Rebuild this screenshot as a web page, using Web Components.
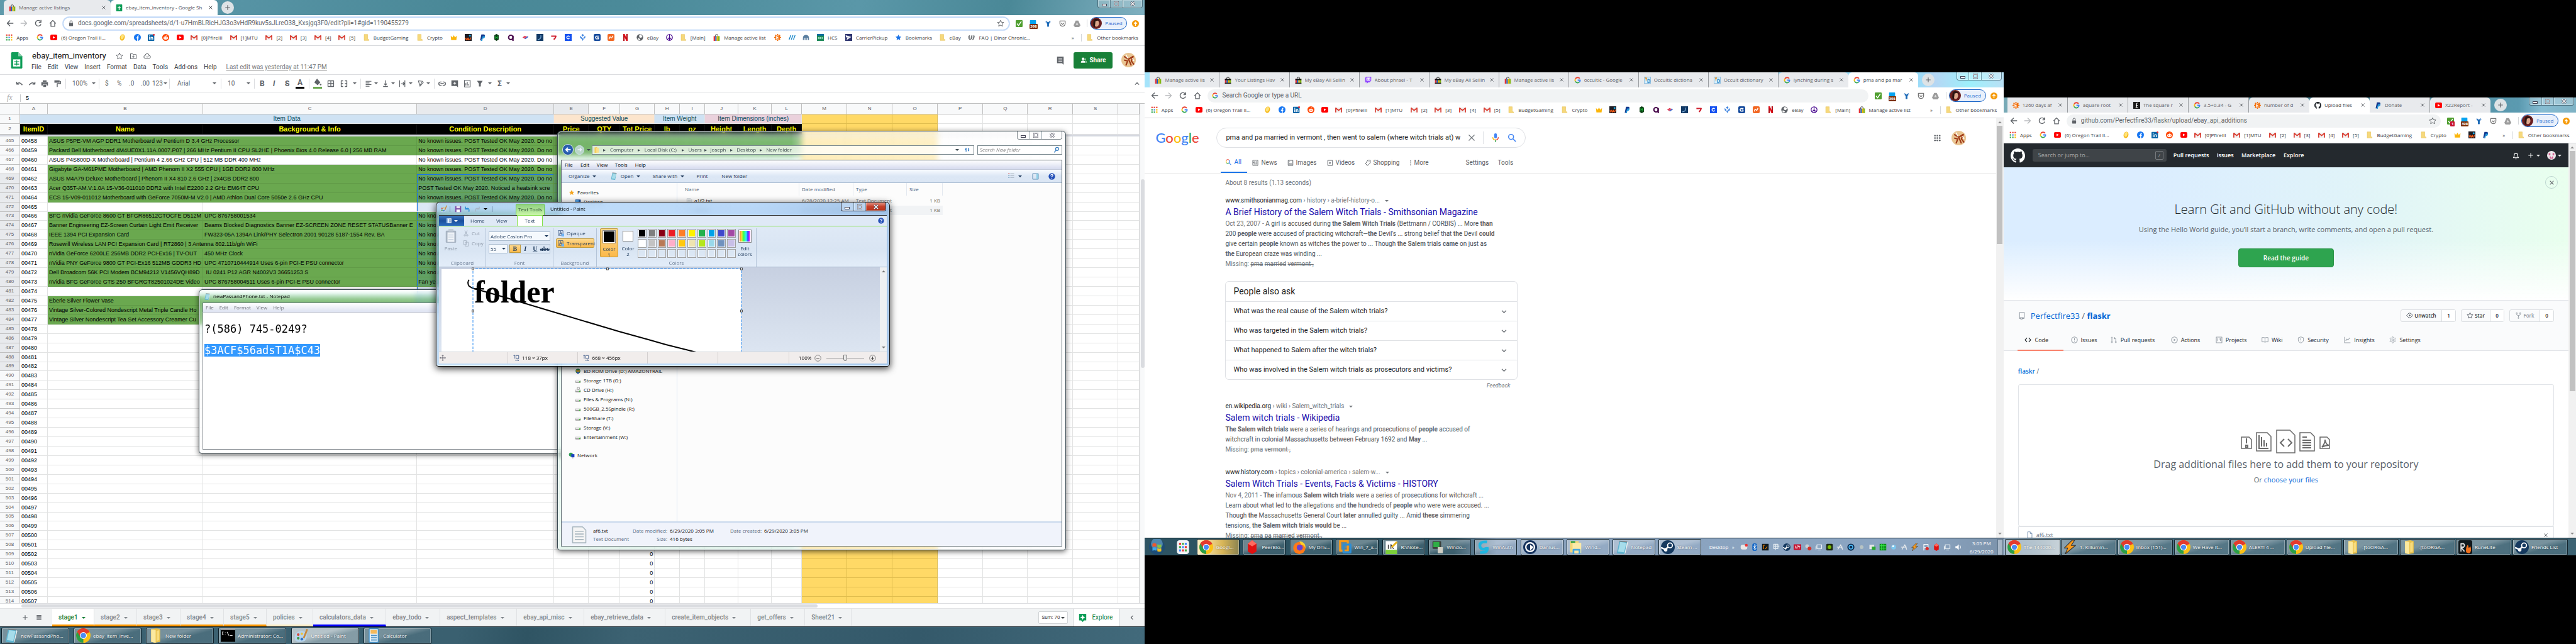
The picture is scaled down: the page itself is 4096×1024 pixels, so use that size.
<!DOCTYPE html>
<html lang="en">
<head>
<meta charset="utf-8">
<title>Desktop</title>
<style>
html,body{margin:0;height:100%;background:#000}
body{font:8px/12px "Open Sans","Noto Sans",sans-serif;color:#222}
main{display:grid;grid-template-columns:4fr 3fr 2fr;height:100vh;overflow:hidden}
.mid{margin:115px 0 141px}
.right{margin:155px 0 141px}
</style>
</head>
<body>
<main>
  <desk-monitor class="left">
    <chrome-window kind="sheets"><sheets-app></sheets-app></chrome-window>
    <note-pad></note-pad>
    <file-explorer></file-explorer>
    <paint-app></paint-app>
    <task-bar slot="bar" kind="left"></task-bar>
  </desk-monitor>
  <desk-monitor class="mid">
    <chrome-window kind="search"><google-results></google-results></chrome-window>
    <task-bar slot="bar" kind="mid"></task-bar>
  </desk-monitor>
  <desk-monitor class="right">
    <chrome-window kind="github"><github-page></github-page></chrome-window>
    <task-bar slot="bar" kind="right"></task-bar>
  </desk-monitor>
</main>
<script>
/* ---------- icons, all on a 16 x 16 grid ---------- */
const line = (d, c = '#5f6368', w = 1.6) => `<path d="${d}" fill="none" stroke="${c}" stroke-width="${w}" stroke-linejoin="round"/>`;
const fill = (d, c = '#5f6368') => `<path d="${d}" fill="${c}"/>`;
const rect = (x, y, w, h, c, r = 0) => `<rect x="${x}" y="${y}" width="${w}" height="${h}" rx="${r}" fill="${c}"/>`;
const disc = (x, y, r, c) => `<circle cx="${x}" cy="${y}" r="${r}" fill="${c}"/>`;
const ring = (x, y, r, c, w = 1.5) => `<circle cx="${x}" cy="${y}" r="${r}" fill="none" stroke="${c}" stroke-width="${w}"/>`;
const bag = h => line('M5 6V4a3 3 0 0 1 6 0v2', h, 1.3) + rect(1, 5, 4, 11, '#e53238') + rect(5, 5, 3, 11, '#0064d2') + rect(8, 5, 3, 11, '#f5af02') + rect(11, 5, 4, 11, '#86b817');
const octo = 'M8 0C3.58 0 0 3.58 0 8c0 3.54 2.29 6.53 5.47 7.59.4.07.55-.17.55-.38 0-.19-.01-.82-.01-1.49-2.01.37-2.53-.49-2.69-.94-.09-.23-.48-.94-.82-1.13-.28-.15-.68-.52-.01-.53.63-.01 1.08.58 1.23.82.72 1.21 1.87.87 2.33.66.07-.52.28-.87.51-1.07-1.78-.2-3.64-.89-3.64-3.95 0-.87.31-1.59.82-2.15-.08-.2-.36-1.02.08-2.12 0 0 .67-.21 2.2.82.64-.18 1.32-.27 2-.27s1.36.09 2 .27c1.53-1.04 2.2-.82 2.2-.82.44 1.1.16 1.92.08 2.12.51.56.82 1.27.82 2.15 0 3.07-1.87 3.75-3.65 3.95.29.25.54.73.54 1.48 0 1.07-.01 1.93-.01 2.2 0 .21.15.46.55.38A8.01 8.01 0 0 0 16 8c0-4.42-3.58-8-8-8z';
const starD = 'M8 1.5l2 4.4 4.8.5-3.6 3.2 1 4.7L8 11.9l-4.2 2.4 1-4.7L1.2 6.4l4.8-.5z';
const googleG = line('M13 4.2A6 6 0 0 0 2.8 5.2', '#ea4335', 2.6) + line('M2.8 5.2a6 6 0 0 0 0 5.6', '#fbbc05', 2.6) + line('M2.8 10.8A6 6 0 0 0 12.2 12.3', '#34a853', 2.6) + line('M12.2 12.3A6 6 0 0 0 14 8H8.2', '#4285f4', 2.6);
const sunny = disc(8, 8, 6, '#f26f0c') + line('M8 0v16M0 8h16M2.4 2.4l11.2 11.2M13.6 2.4L2.4 13.6', '#f26f0c', 2.4) + line('M10.5 4.5h-5v7h5M5.5 8h4', '#fff', 1.5);
const chromeLogo = disc(8, 8, 8, '#fbc116') + fill('M8 8L1.1 4A8 8 0 0 1 14.9 4z', '#e33b2e') + fill('M8 8L1.1 4A8 8 0 0 0 8 16z', '#2a9f48') + fill('M8 4.5h6.9A8 8 0 0 0 1.2 3.8L4.7 9.5z', '#e33b2e') + disc(8, 8, 3.8, '#fff') + disc(8, 8, 3, '#4a8af4');
const tFolder = fill('M3 1l6-1 4 1v14l-6 1-4-1z', '#e9c24e') + fill('M3 1l5 1v14l-5-1z', '#fbe9a0') + fill('M9 3l3-1v11l-3 1z', '#f8dc7d');
const pad = fill('M5 1l9 1-3 14-9-1z', '#5fb3cf') + fill('M6 2l7 1-2.5 11-7-1z', '#a6dcea') + line('M5 1l9 1', '#777', 1) + fill('M11 16l3-14 1 1-3 12z', '#eee');
const drive = rect(1, 7, 14, 7, '#9b9b9b', 2) + rect(2, 6, 12, 5, '#e6e6e6', 2) + rect(11, 10, 3, 3, '#37b52a');
const steam = disc(8, 8, 8, '#15395f') + ring(10.5, 6, 2.8, '#fff', 1.3) + disc(5.5, 11, 2, '#fff') + line('M0 8.5l5 2.2 3.5-3', '#fff', 1.8);
const bolt = fill('M10 0L1 9h4l-3 7 12-10H9l4-6z', '#f79a1c') + line('M10 0L1 9h4l-3 7 12-10H9l4-6z', '#333', .8);
const ICONS = {
  back: line('M15 8H2M8 2L2 8l6 6', '#5f6368', 1.9), fwd: line('M1 8h13M8 2l6 6-6 6', '#b9bbbe', 1.9),
  reload: line('M13.5 10A6 6 0 1 1 12.5 4M13.5 1v5H9', '#5f6368', 1.9), home: line('M1.5 8.5L8 2l6.5 6.5M4 7v7.5h8V7', '#5f6368', 1.8),
  lock: rect(3, 7, 10, 8, '#5f6368', 1) + line('M5 7V4.5a3 3 0 0 1 6 0V7'), star: line(starD, '#5f6368', 1.3), bluestar: fill(starD, '#1a73e8'),
  apps: [0, 1, 2].map(r => [0, 1, 2].map(c => rect(1 + c * 5.5, 1 + r * 5.5, 3.2, 3.2, ['#ea4335', '#ea4335', '#ea4335', '#34a853', '#4285f4', '#fbbc05', '#34a853', '#34a853', '#fbbc05'][r * 3 + c])).join('')).join(''),
  g: googleG, yt: rect(0, 1.5, 16, 13, '#f00', 3) + fill('M6 5l5 3-5 3z', '#fff'),
  coin: `<ellipse cx="8" cy="8" rx="5.5" ry="7.5" fill="#f6b91b" transform="rotate(15 8 8)"/><ellipse cx="7.5" cy="7" rx="3.5" ry="5.5" fill="#ffe37a" transform="rotate(15 8 8)"/>`,
  fb: disc(8, 8, 8, '#1877f2') + line('M8.5 16V6.5q0-2 2.5-2M5.5 9h5.5', '#fff', 2.2),
  li: rect(0, 1, 15, 15, '#0a66a8', 1) + line('M4 7v6M7.5 7v6M7.5 10q0-2.5 2-2.5t2 2.5v3', '#fff', 1.9) + disc(4, 4.5, 1.2, '#fff') + disc(14, 2, 2, '#e8232a'),
  reddit: disc(8, 8, 8, '#ff4500') + `<ellipse cx="8" cy="9.5" rx="5.2" ry="3.6" fill="#fff"/>` + disc(6, 9, 1, '#ff4500') + disc(10, 9, 1, '#ff4500') + line('M8 6l1-3 2 .5', '#fff', 1),
  gmail: rect(0, 2.5, 16, 12, '#f2f2f2', 1) + line('M1.3 14V4L8 9.5 14.7 4v10', '#d93a2e', 2.4),
  folder: fill('M3 1h8v11l3 1v2H3z', '#f6d97c') + line('M3 1h8v11l3 1v2H3z', '#e4bd52', .8),
  crown: fill('M1 4l4 4 3-5 3 5 4-4-1 10H2z', '#fbb60c'), wu: rect(0, 0, 16, 16, '#1c1c24') + line('M1.5 9l2 5 2-5 2 5 2-5v3q2 3 4-1V8', '#ff5b12', 1.7) + disc(12, 4, 2.2, '#1ba7e0'),
  pp: fill('M5 1h6q3 1 2 4.500T8 10H6l-1 5H2z', '#12388d') + fill('M8 5h5q1 5-5 6l-1 5H4z', '#2297d8'),
  hex: fill('M8 0l5 3v10l-5 3-5-3V3z', '#0b3b12') + line('M6 4v8M10 4v8M6 8h4', '#19c13c', 1.4),
  ada: ring(7.5, 8, 5, '#4a0d4e', 3) + rect(11, 4, 3.2, 12, '#4a0d4e'), boa: fill('M1 8l6-4 2 1-5 4z', '#e0314b') + fill('M5 10l7-5 3 2-7 5z', '#3f6bd0') + fill('M3 9l6-4 3 1-6 5z', '#e0506a'),
  ship: rect(0, 0, 16, 16, '#123a66') + line('M3 13Q12 12 10 3', '#7fb1df', 1.8), swoosh: line('M2 5h11q-1 5-5 8', '#cf1f2e', 3),
  cc: rect(0, 0, 16, 16, '#1652f0') + line('M11 6.5A3.3 3.3 0 1 0 11 9.5', '#fff', 2), tri: fill('M8 0l3 3-3 3-3-3zM2 4l4 4v4L2 9zM14 4l-4 4v4l4-3zM8 9l2 3-2 4-2-4z', '#3f84e0'),
  gb: rect(0, 0, 16, 16, '#154a9c', 3) + line('M12 5H6L4 8l2 3.500h5V8.500H8', '#fff', 2), nx: rect(0, 0, 16, 16, '#f26722', 3) + line('M3.5 12q2-8 4-4t4.500-4', '#fff', 2),
  nf: line('M4.5 0v16M11.5 0v16', '#b1060f', 3) + line('M4.5 0l7 16', '#e50914', 3), globe: disc(8, 8, 7.5, '#5f6368') + fill('M9 1l5 4-3 4-4-1-1-4zM4 9l5 3-2 3-4-3z', '#fff'),
  peace: ring(8, 8, 6.8, '#4a0a90', 1.8) + line('M8 1v14M8 8l-5 5M8 8l5 5', '#4a0a90', 1.6), bag: bag('#333'), bagb: bag('#111') + rect(1, 5, 14, 3, '#111') + rect(1, 14, 14, 2, '#111'),
  sun: sunny, slashes: line('M1 13L5 3M6 13l4-10M11 13l4-10', '#1987c9', 2), kraken: fill('M1 14V9a7 7 0 0 1 14 0v5h-2V9h-2v5H9V9H7v5H5V9H3v5z', '#5b7fa0'),
  hcs: rect(0, 0, 16, 16, '#1f8a5a') + rect(0, 0, 16, 4, '#0a6f9e') + line('M3 8h2v3H3zM7 8h2v3H7zM11 8h2v3h-2', '#cfe', 1), usps: rect(0, 0, 16, 16, '#2e3570') + fill('M1 3l13 4-9 1-2 6 11-7-12 1z', '#fff'),
  wreath: line('M1 4q1 9 4 9t3-9q0 9 3 9t4-9M4 3v8M12 3v8', '#5f6368', 1.5),
  check: rect(0, 0, 16, 16, '#4f9e2f', 2) + line('M3 8l3.5 4.5L13 3', '#fff', 2.2), hat: rect(1, 0, 14, 9, '#06a3f0', 1) + fill('M3 9l2-1 3 1 3-1 2 1z', '#06a3f0'),
  why: line('M2 3l6 6 6-6M8 8v8', '#bcd3ee', 3) + fill('M3 1l5 4 5-4-3 8v6H6V9z', '#1767b5'), pocket: line('M2 2h12v6a6 6 0 0 1-12 0zM5 7l3 3 3-3', '#777', 1.9),
  gdrive: fill('M5 1h6l5 11-3 4H3l-3-4z', '#9b9b9b') + fill('M8 5l3 6H5z', '#ddd'), up: disc(8, 8, 8, '#f59b0b') + line('M8 13V5M4.5 8.5L8 4.5l3.5 4', '#fff', 2),
  face: disc(8, 8, 8, '#6b1f20') + `<ellipse cx="8.5" cy="8" rx="3.5" ry="4.8" fill="#dca78c"/>` + fill('M4 7q0-6 5-5 4 0 4 5l-2-3-4 1-1 9q-3-2-2-7z', '#2a1512'),
  lion: disc(8, 8, 8, '#e9c593') + line('M3 4l5 3 5-3-2 5 3 4M5 14l2-5-4-1M8 7l3 7', '#a03a17', 1.5) + line('M5 2l2 4M12 6l2 3', '#fff', 1),
  twitch: fill('M1 3l2-3h12v9l-4 4H8l-3 3v-3H1z', '#9147ff') + rect(4, 2, 9, 7, '#fff') + line('M7 4v3M10.5 4v3', '#9147ff', 1.3),
  yd: rect(.5, .5, 15, 15, '#d5eefb') + line('M.5.5h15v15H.5z', '#5b9fd0', 1) + line('M3 2l2 3 2-3M5 5v4', '#e58a1a', 1.8) + line('M9 6v8h2q3-1 3-4t-3-4z', '#2a86c8', 1.8),
  root: rect(0, 0, 16, 16, '#1b1b1b') + line('M8 3v8q0 2-2 2h5M6 8h4M8 3h2', '#fff', 1.5), octo: fill(octo, '#24292e'), octow: fill(octo, '#fff'),
  sheet: fill('M1 1a1 1 0 0 1 1-1h6l4 4v11a1 1 0 0 1-1 1H2a1 1 0 0 1-1-1z', '#0f9d58') + fill('M8 0l4 4H8z', '#87ceac') + fill('M3 7h7v7H3z', '#fff') + line('M4 9.3h5M4 11.7h5M6.500 8v5', '#0f9d58', .9), sheeticon: rect(1, 0, 14, 16, '#0f9d58', 1) + line('M8 4v9M4.5 7h7', '#fff', 2),
  move: line('M2 3h4l1.5 2H14v9H2zM8 7v5M5.5 9.5h5', '#5f6368', 1.3), cloud: line('M4 13a3 3 0 0 1 0-6 4 4 0 0 1 8 0 3 3 0 0 1 0 6zM6 9l2 2 3-3.5', '#5f6368', 1.3),
  comment: fill('M2 1h12v15l-3-3H2z') + line('M4.5 4.5h7M4.5 7h7M4.5 9.5h7', '#fff', 1), people: disc(6, 5, 3, '#fff') + fill('M1 14q0-5 5-5t5 5z', '#fff') + disc(11, 6, 2, '#8cc39c') + fill('M11 9q4 0 4 5h-3z', '#8cc39c'),
  undo: line('M2 4v5h5M2.5 8.5Q8 3 14 11', '#5f6368', 2), redo: line('M14 4v5H9M13.5 8.5Q8 3 2 11', '#5f6368', 2), print: fill('M4 1h8v3H4zM1 5h14v7h-3V9H4v3H1zM5 10h6v5H5z'), brush: fill('M2 1h11v5H2z') + line('M13 3.5h2V8H8v7', '#5f6368', 1.9),
  bucket: fill('M7 1l6 7-5 5-6-5z') + disc(13.5, 12, 1.5, '#5f6368'), grid: line('M2 2h12v12H2zM8 2v12M2 8h12', '#5f6368', 1.7), merge: line('M6 2H2v12h4M10 2h4v12h-4M2 8h4M14 8h-4', '#5f6368', 1.7),
  align: line('M2 3h12M2 6.5h8M2 10h12M2 13.5h8', '#5f6368', 1.5), valign: line('M3 14h10M8 1v9M5 8l3 3 3-3', '#5f6368', 1.7), wrap: line('M2 1v14M13 1v14M5 8h7M9 5l3 3-3 3', '#5f6368', 1.6), rotate: line('M3 2l3 10 6-9zM6 14l8-9', '#5f6368', 1.5),
  link: line('M7 5H5a3 3 0 0 0 0 6h2M9 5h2a3 3 0 0 1 0 6H9M5 8h6', '#5f6368', 1.7), addc: fill('M1 1h14v15l-3-3H1z') + line('M8 4v6M5 7h6', '#fff', 1.6), chart: line('M2 1h12v14H2zM5 12V7M8 12V4M11 12V9', '#5f6368', 1.6), funnel: fill('M2 2h12L10 8v6H6V8z'),
  lines: line('M2 2.5h12M2 6h12M2 9.5h12M2 13h12', '#5f6368', 2), plus: line('M8 2v12M2 8h12', '#5f6368', 1.9), explore: fill('M1 0h14v13h-4l-3 3-3-3H1z', '#0f9d58') + fill('M8 2l1.5 3.5L13 7 9.5 8.5 8 12 6.5 8.5 3 7l3.5-1.5z', '#fff'),
  notepad: pad, chrome: chromeLogo, tfolder: tFolder, cmd: rect(0, 1, 16, 14, '#000') + line('M0 1h16', '#bbb', 1.5) + line('M3 4h-1v3h1M5 4.5v.5M5 7v.5M7 4l2 4M10 8h3', '#ddd', .8),
  paint: fill('M8 3q7 0 6.5 6T8 15q-7 1-7-5t7-7z', '#b6d4ec') + disc(5, 7, 1.5, '#d64b3c') + disc(9, 6, 1.3, '#f2c230') + disc(5, 11, 1.5, '#3f9b47') + disc(9, 12, 1.5, '#2f6fc4') + line('M11 11l4-10', '#c98a3c', 1.9),
  calc: rect(3, 0, 11, 16, '#3f8fc9', 1) + rect(4, 1, 9, 14, '#e6f2fa') + rect(5, 2, 7, 4, '#f5b95b') + line('M5.5 8h6.5M5.5 10.5h6.5M5.5 13h6.5', '#4a90c4', 1.3),
  cube: fill('M8 0l5 4v9l-5 3-5-3V4z', '#e01111') + fill('M8 0l5 4-5 3-5-3z', '#ff6a5f'), fox: disc(8, 9, 7, '#ff7a18') + disc(8.5, 8.5, 3.5, '#6a3fd0') + fill('M8 1q8 1 7 9-1-5-5-5z', '#ffd02b'),
  vm: line('M2 1h9v11H2z', '#f59a1b', 2.4) + line('M6 5h8v9H6z', '#2c8ed6', 2.4), npp: rect(1, 1, 13, 15, '#fff') + rect(1, 11, 13, 5, '#7bd03a') + line('M4 5v5M7 10V5l3 5', '#333', 1) + line('M8 8l6-6', '#e7b216', 2.2),
  pc: rect(2, 1, 10, 9, '#3a3f3a', 1) + rect(3, 2, 7, 6, '#2fae46') + rect(8, 8, 6, 7, '#cfcfc4'), auth: line('M12 2Q2 1 4 8q2 4 8 1M4 14q10 1 8-6', '#1fb6e0', 3.2), danius: disc(8, 8, 8, '#16335e') + ring(8, 8, 5, '#fff', 1.6) + fill('M8 5l4 3-4 4z', '#fff'),
  lib: rect(1, 1, 10, 13, '#f4d777') + rect(4, 3, 10, 12, '#fbe9a8') + rect(2, 1, 5, 2, '#39a24a') + line('M5 16v-5h7v5', '#49a6dd', 2), steam, bolt, rl: rect(0, 0, 16, 16, '#10181c', 2) + line('M3 13V4h3q2 2 0 4H3l4 5', '#ddd', 1.3) + fill('M9 14q-1-6 2-9l1 4 2-2q2 7-2 8z', '#f2711c'),
  orb: disc(8, 8, 8, '#1d4d77') + disc(8, 5, 6, '#4f86ad') + fill('M3.5 5q2-1.500 4 0v3q-2-1-4 0z', '#f0572b') + fill('M8.5 5.5q2 1 4 0v3q-2 1-4 0z', '#8ac53e') + fill('M3.5 9q2-1 4 0v3q-2-1-4 0z', '#3fa5e8') + fill('M8.5 9.5q2 1 4 0v3q-2 1-4 0z', '#f9c21d'),
  launcher: rect(1, 0, 14, 16, '#f2f4f6', 3) + [0, 1, 2].map(r => [0, 1, 2].map(c => rect(3.5 + c * 3.3, 3 + r * 3.8, 2.3, 2.3, ['#e33', '#4a4', '#48f'][(r + c) % 3])).join('')).join(''),
  x: line('M3 3l10 10M13 3L3 13', '#5f6368', 2), xthin: line('M2 2l12 12M14 2L2 14', '#70757a', 1.5), chev: line('M3 5.5l5 5 5-5', '#70757a', 1.9), chevl: line('M10.5 3l-5 5 5 5', '#5f6368', 1.9), chevu: line('M3 10.5l5-5 5 5', '#5f6368', 1.9),
  mic: rect(5.5, 0, 5, 9, '#4285f4', 2.5) + line('M3 7q0 5 5 5', '#fbbc05', 1.6) + line('M13 7q0 5-5 5', '#ea4335', 1.6) + line('M8 12v4', '#34a853', 1.6), mag: ring(6.5, 6.5, 4.5, '#4285f4', 1.8) + line('M10 10l5 5', '#4285f4', 1.8), magc: line('M10 2.5a4.5 4.5 0 0 0-7 1', '#ea4335', 1.8) + line('M3 3.5q-1.5 3 .5 6', '#fbbc05', 1.8) + line('M3.5 9.5q3 2 6.5 0', '#34a853', 1.8) + line('M10 2.5q3 4 0 7l5 5', '#4285f4', 1.8),
  news: line('M1.5 1.5h13v13h-13zM4 5h3v3H4zM9 5h4M9 8h4M4 11h9', '#5f6368', 1.4), pic: line('M2 1.5h12v13H2z') + fill('M4 12l2.5-4 2 3 1.5-2 2.5 3z') + disc(6, 5, 1, '#5f6368'), vid: line('M2 1.5h12v13H2z') + fill('M6 5l5 3-5 3z'), tag: line('M8 1h6v7l-7 7-5-5z') + disc(11, 4.5, 1, '#5f6368'), dots: disc(8, 3, 1.3, '#5f6368') + disc(8, 8, 1.3, '#5f6368') + disc(8, 13, 1.3, '#5f6368'),
  nine: [2.5, 8, 13.5].map(y => [2.5, 8, 13.5].map(x => disc(x, y, 1.9, '#5f6368')).join('')).join(''),
  bell: line('M3 12q1.5-1 1.5-5a3.5 3.5 0 0 1 7 0q0 4 1.5 5zM7 14.5h2', '#fff', 1.4), plusw: line('M8 2v12M2 8h12', '#fff', 1.5), ident: disc(8, 8, 8, '#eee8ec') + rect(3, 4, 3, 4, '#d4608f') + rect(10, 4, 3, 4, '#d4608f') + rect(5, 10, 2, 4, '#d4608f') + rect(9, 10, 2, 4, '#d4608f') + rect(5, 12, 6, 2, '#d4608f'),
  repo: line('M3 1h10v11H3zM3 12v2h2M9 14h4M5.5 12v4l1.5-1 1.5 1v-4', '#959da5', 1.4), eye: line('M1 8q7-11 14 0-7 11-14 0z', '#586069', 1.4) + disc(8, 8, 2, '#586069'), star2: line(starD, '#586069', 1.4), fork: line('M4 4v2q0 2 4 2t4-2V4M8 8v5', '#959da5', 1.4) + ring(4, 3, 1.5, '#959da5', 1.2) + ring(12, 3, 1.5, '#959da5', 1.2) + ring(8, 14, 1.3, '#959da5', 1.2),
  code: line('M6 3L1.5 8 6 13M10 3l4.5 5-4.5 5', '#24292e', 1.7), issue: ring(8, 8, 6.8, '#959da5', 1.5) + line('M8 4v5M8 11v1.5', '#959da5', 1.5), pr: line('M3 5v7M12 12V6q0-2-3-2M10 2L8 4l2 2', '#959da5', 1.5) + ring(3, 3, 1.5, '#959da5', 1.3) + ring(3, 13, 1.5, '#959da5', 1.3) + ring(12, 13, 1.5, '#959da5', 1.3),
  act: ring(8, 8, 6.8, '#959da5', 1.5) + fill('M6.5 5l4.5 3-4.5 3z', '#959da5'), proj: line('M1.5 1.5h13v13h-13zM5 4v7M8 4v4M11 4v6', '#959da5', 1.5), wiki: line('M1 2.5h5q2 0 2 2 0-2 2-2h5v10h-5q-2 0-2 1.5 0-1.5-2-1.5H1zM8 4v10', '#959da5', 1.4), shield: line('M8 1l6 2v5q0 5-6 7-6-2-6-7V3zM8 4v5M8 11v1', '#959da5', 1.4), graph: line('M1.5 1v13.5H15M4 10l3-4 2 2 5-5', '#959da5', 1.5), gear: ring(8, 8, 2.2, '#959da5', 1.4) + line('M7 1h2l.5 2 2 1 2-.7 1 1.8-1.5 1.4v2.5l1.5 1.5-1 1.7-2-.7-2 1L9 15H7l-.5-2.500-2-1-2 .7-1-1.7L3 9V6.500L1.500 5.100l1-1.800 2 .7 2-1z', '#959da5', 1.2),
  doc: line('M3 1h6l4 4v10H3zM9 1v4h4', '#7f97b5', 1.4),
  desk: rect(1, 2, 14, 12, '#1f4f9b', 1) + rect(2, 3, 8, 6, '#4fa3e8'), gold: fill(starD, '#f5a623'), txt: fill('M2 1h9l3 3v12H2z', '#f5f5f5') + line('M2 1h9l3 3v11.5H2zM4 5h8M4 7.5h8M4 10h8M4 12.5h8', '#a9b7c0', .9), drive, cd: drive + ring(9, 4, 3, '#aaa', 2), bd: disc(8, 8, 6, '#2c7f4d') + fill('M3 4l5 3 5-3-2 8H5z', '#d9921c') + disc(8, 12, 3, '#2a56b4'), net: disc(6, 6, 5, '#2f9c55') + rect(7, 5, 8, 8, '#1c3fc4') + line('M11 13v3', '#789', 1.5),
  addrf: fill('M2 2l6-1v13l-6 1z', '#f6cf5e') + fill('M6 3h6v11H6z', '#fbe08a'), refresh: line('M5 13V5L3 8M5 3v4M11 3v8l2-3', '#1f6fc0', 1.8), view: line('M6 3h8M6 7h8M6 11h8', '#9aa7b5', 1.2) + rect(2, 2, 2, 2, '#c33') + rect(2, 6, 2, 2, '#58a') + rect(2, 10, 2, 2, '#58a'), pane: line('M1.5 1.5h13v13h-13z', '#4b7fa8', 1.3) + rect(10, 2, 4, 12, '#8fd0e8'), help: disc(8, 8, 7.5, '#2450b8') + line('M5.5 6q0-2.5 2.5-2.5t2.5 2q0 1.5-2.5 3V10M8 11.5V13', '#fff', 1.7), magb: ring(9.5, 6, 4, '#3a7fc0', 2) + line('M7 9l-5 6', '#3a7fc0', 2.2),
  save: rect(1, 1, 14, 14, '#7d4fa8', 1) + rect(4, 1, 8, 5, '#e8e0f0') + rect(4, 9, 8, 6, '#fff'), bundo: line('M3 2v6h6M3.5 7.5Q13 3 11 14', '#2b8fd8', 2.3), bredo: line('M13 2v6H7M12.5 7.5Q3 3 5 14', '#a8b7c8', 2.3), app: rect(2, 2, 12, 12, '#fff') + rect(2, 2, 4, 12, '#9bc2ef') + line('M8 5h5M8 8h5M8 11h5', '#2a62ad', 1.3),
  paste: rect(2, 2, 12, 14, '#a9b5c4', 1) + rect(4, 4, 8, 11, '#eef2f7') + rect(5, 0, 6, 3, '#c4cdd8', 1) + line('M5 7h6M5 9.5h6M5 12h6', '#c3cfde', .8), cut: line('M5 1l4 9M11 1l-4 9', '#a5b1c0', 1.6) + ring(5, 13, 2, '#a5b1c0') + ring(11, 13, 2, '#a5b1c0'), copy: line('M2 1h7v10H2zM6 5h8v10H6z', '#a5b1c0', 1.4), opq: line('M1 1h12v12H1z', '#2a4a7c', 1.2) + rect(9, 9, 7, 7, '#6fb4f5') + line('M4 11l3-8 3 8M5 8.5h4', '#2a4a7c', 1.4),
  cross: line('M8 1v14M1 8h14M6 3l2-2 2 2M6 13l2 2 2-2M3 6L1 8l2 2M13 6l2 2-2 2', '#334', 1.1), dim: line('M3 1v9M1 3l2-2 2 2M7 2h7v8H7zM5 14h9M12 12l2 2-2 2', '#2a4a7c', 1.3), minusc: ring(8, 8, 7, '#777', 1.3) + line('M4.5 8h7', '#444', 1.8), plusc: ring(8, 8, 7, '#777', 1.3) + line('M4.5 8h7M8 4.5v7', '#444', 1.8),
  discord: rect(1, 3, 14, 10, '#e8e8e8', 4) + disc(13, 4, 3, '#e33'), bt: rect(3, 0, 10, 16, '#1467c6', 4) + line('M5 5l6 6-3 3V2l3 3-6 6', '#fff', 1.2), nbox: rect(1, 1, 14, 14, '#10181c') + line('M4 12V4h3M8 12l4-5', '#f80', 1.5), tw: line('M3 2h9v9H3zM3 6h12M7 2v12', '#dfe8ef', 1.7), apm: rect(0, 2, 16, 12, '#c8102e') + line('M3 11l1.5-6L6 11M8 11V5h2v3M12 11V5l2 3', '#fff', 1), ball: disc(6, 6, 4, '#c9cfd4') + disc(11, 11, 4, '#d6322b'), mon: line('M4 3h10v8H4zM6 14h6M2 6v7', '#eef3f7', 1.6), nv: rect(1, 1, 14, 14, '#1c2a12', 2) + disc(8, 8, 4, '#76b900'), arrow: line('M3 13L9 3l4 10M1 8h12', '#f0f0f0', 1.6), circ: disc(8, 8, 7.5, '#0d2e52') + ring(8, 8, 4, '#4fc0ff', 1.7), dotg: disc(8, 8, 4, '#b8c4c4'), netg: rect(2, 3, 10, 9, '#e8e8e8') + rect(7, 7, 8, 7, '#28a72f'), leds: rect(1, 1, 14, 14, '#0d8f1c') + line('M5 1v14M10 1v14M1 5h14M1 10h14', '#3bea4c', 1.3), drop: disc(8, 8, 5, '#7cc7ee') + disc(7, 6, 2, '#fff'), flag: line('M4 15V2h9v7H4', '#fff', 1.6) + disc(11, 11, 3.5, '#d92c2c'), vol: fill('M3 6h3l4-4v12L6 10H3z', '#fff') + line('M12.5 4q3 4 0 8', '#fff', 1.3)
};

/* ---------- small helpers ---------- */
const ic = (name, size = 11) => `<ui-icon name="${name}" size="${size}"></ui-icon>`;
const at = (x, html, cls = '') => [x, html, cls];
const icAt = (centre, name, size = 11) => [centre - size / 2, ic(name, size), ''];
/* A row whose cells share its width in proportion to the distance between their starts. */
const track = (total, cells, cls = '') => {
  const list = cells[0][0] > 0 ? [at(0, ''), ...cells] : cells;
  return `<div class="track ${cls}">` + list.map(([x, html, c], i) =>
    `<div class="cell ${c}" style="flex-grow:${Math.round(((i + 1 < list.length ? list[i + 1][0] : total) - x) * 10)}">${html}</div>`).join('') + '</div>';
};
const BASE = `
*{box-sizing:border-box}
button,input,select{font:inherit;color:inherit;background:none;border:0;padding:0;margin:0;outline:0;appearance:none;border-radius:0;text-align:left}
a{color:inherit;text-decoration:none}
h1,h2,h3,p{margin:0;font-weight:400;font-size:inherit}
.track{display:flex;align-items:stretch;width:100%}
.cell{flex:1 1 0;min-width:0;display:flex;align-items:center;white-space:nowrap}
.wc{display:flex;width:72px;height:13px;border:1px solid #1d3b4a99;border-top:0;border-radius:0 0 4px 4px;overflow:hidden;background:#ffffff38}
.wc button{flex:20;display:flex;align-items:center;justify-content:center;border-right:1px solid #1d3b4a77;box-shadow:inset 0 0 0 1px #ffffff55}
.wc button:last-child{flex:33;border:0}
.car{width:0;height:0;border:3px solid transparent;border-top-color:currentColor;border-bottom:0}
`;
const winCtl = `<span class="wc"><button aria-label="Minimize"><svg width="8" height="8"><rect x=".5" y="4.5" width="7" height="3" fill="#fff" stroke="#445"/></svg></button><button aria-label="Restore"><svg width="8" height="8"><rect x="1" y="1" width="6" height="6" fill="none" stroke="#445" stroke-width="2"/><rect x="1" y="1" width="6" height="6" fill="none" stroke="#fff"/></svg></button><button aria-label="Close"><svg width="8" height="8"><path d="M1 1l6 6M7 1L1 7" stroke="#445" stroke-width="3"/><path d="M1 1l6 6M7 1L1 7" stroke="#fff" stroke-width="1.5"/></svg></button></span>`;
class Part extends HTMLElement {
  constructor() { super(); this.attachShadow({ mode: 'open' }); }
  connectedCallback() { this.shadowRoot.innerHTML = `<style>${BASE}${this.css()}</style>${this.html()}`; }
}
const part = (tag, css, html) => customElements.define(tag, class extends Part {
  css() { return css; }
  html() { return html(this); }
});

part('ui-icon', ':host{display:inline-flex;flex:none}', el => {
  const s = el.getAttribute('size');
  return `<svg width="${s}" height="${s}" viewBox="0 0 16 16" aria-hidden="true">${ICONS[el.getAttribute('name')]}</svg>`;
});

part('desk-monitor', `:host{display:flex;flex-direction:column;position:relative;min-width:0;overflow:hidden}
.body{flex:1;min-height:0;display:flex;flex-direction:column}`, () => '<div class="body"><slot></slot></div><slot name="bar"></slot>');

/* ---------- browser window ---------- */
const MARKS = [[13, 'apps', 'Apps'], [81, 'g'], [113, 'yt', '(6) Oregon Trail II...'], [266, 'coin'], [299, 'fb'], [331, 'li'], [363, 'reddit'], [395, 'yt'], [426, 'gmail', '[0]PfireIII'], [514, 'gmail', '[1]MTU'], [594, 'gmail', '[2]'], [648, 'gmail', '[3]'], [703, 'gmail', '[4]'], [757, 'gmail', '[5]'], [811, 'folder', 'BudgetGaming'], [931, 'folder', 'Crypto'], [1007, 'crown'], [1039, 'wu'], [1071, 'pp'], [1103, 'hex'], [1135, 'ada'], [1167, 'boa'], [1199, 'ship'], [1231, 'swoosh'], [1263, 'cc'], [1295, 'tri'], [1327, 'gb'], [1359, 'nx'], [1391, 'nf'], [1423, 'globe', 'eBay'], [1489, 'peace'], [1520, 'folder', '[Main]'], [1595, 'bag', 'Manage active list'], [1731, 'sun'], [1763, 'slashes'], [1795, 'kraken'], [1827, 'hcs', 'HCS'], [1890, 'usps', 'CarrierPickup'], [2001, 'bluestar', 'Bookmarks'], [2099, 'folder', 'eBay'], [2165, 'wreath', 'FAQ | Dinar Chronic...']];
const WINDOWS = {
  sheets: { w: 1820, full: 2560, marks: 41, from: 6, step: 170, active: 1, tabs: [['bag', 'Manage active listings'], ['sheeticon', 'ebay_item_inventory - Google Sh']], url: 'docs.google.com/spreadsheets/d/1-u7HmBLRicHJG3o3vHdR9kuv5sJLreO38_Kxsjgq3F0/edit?pli=1#gid=1190455279', lead: 'lock', star: 1 },
  search: { w: 1365, full: 1920, marks: 33, from: 8, step: 111, active: 10, tabs: [['bag', 'Manage active lis'], ['bagb', 'Your Listings Hav'], ['bagb', 'My eBay All Sellin'], ['twitch', 'About phrael - T'], ['bagb', 'My eBay All Sellin'], ['bag', 'Manage active lis'], ['g', 'occultic - Google'], ['yd', 'Occultic dictiona'], ['yd', 'Occult dictionary'], ['g', 'lynching during s'], ['g', 'pma and pa mar']], url: '', lead: 'g' },
  github: { w: 910, full: 1280, marks: 19, from: 6, step: 96, active: 5, tabs: [['sun', '1260 days af'], ['g', 'aquare root'], ['root', 'The square r'], ['g', '3.5+0.34 - G'], ['sun', 'number of d'], ['octo', 'Upload files'], ['pp', 'Donate'], ['yt', 'X22Report -']], url: 'github.com/Perfectfire33/flaskr/upload/ebay_api_additions', lead: 'lock', star: 1, alert: 1 }
};
part('chrome-window', `:host{display:flex;flex-direction:column;flex:1;min-height:0;background:#fff;color:#3c4043}
.strip{height:24px;background:linear-gradient(100deg,#5f9aab,#5794a5 20%,#4a8897 40%,#4b8a99 55%,#5a97a8 75%,#4a8897 88%,#7fb0c0)}
:host([kind=search]) .strip{background:linear-gradient(90deg,#a5e4fb,#9adcf8 90%,#b5d6f4 92%,#9df0fb 96%,#b9e0f5)}
:host([kind=github]) .strip{background:linear-gradient(90deg,#78aab6,#4d8797 60%,#5b9ab0 90%,#86bcd2 94%,#7eb2c4)}
.fullh{height:100%}
.tab{flex:1;height:100%;min-width:0;display:flex;align-items:center;background:#e8eaed;padding:0 7px 0 8px;border-radius:6px 6px 0 0;color:#5f6368;gap:5px}
.tab.rule{border-right:1px solid #9a9da1;border-radius:0}
.tab.on{background:#fff;color:#4a4e52}
.tab span{flex:1;min-width:0;overflow:hidden}
.new{width:20px;height:20px;border-radius:50%;background:#dee3e6;display:flex;align-items:center;justify-content:center}
.top{align-items:flex-start!important}
.bar{height:26px}
.omni{flex:1;min-width:0;height:21px;border-radius:11px;background:#f1f3f4;display:flex;align-items:center;gap:6px;padding:0 7px}
.omni input{flex:1;min-width:0;font:10px/14px Roboto,sans-serif;color:#5f6368}
.omni input::placeholder{color:#5f6368;opacity:1}
:host([kind=sheets]) .omni{background:#fff;border:1px solid #b3d0f5;box-shadow:0 0 0 1px #cfe1fa}
.pill{width:59px;height:20px;border:1px solid #1a66c8;border-radius:10px;background:#e9f0fb;color:#2f6fcf;display:flex;align-items:center;gap:5px}
.sep{width:1px;height:12px;background:#d4d7da}
.ext{position:relative;display:flex}
.ext b{position:absolute;left:0;top:6px;font:700 6px/8px "Open Sans",sans-serif;background:#7a2c05;color:#fff;padding:0 1px;border-radius:1px}
.ext b.one{left:5px;background:#c8102e;padding:0 2px}
.marks{height:23px;border-bottom:1px solid #d7d9dc;padding-bottom:3px;color:#3c4043}
.marks a{display:flex;align-items:center;gap:6px}
.page{flex:1;min-height:0;display:flex}`, el => {
  const k = WINDOWS[el.getAttribute('kind')], W = k.w;
  const tabs = k.tabs.map(([i, t], n) => at(k.from + n * k.step, `<button class="tab ${n === k.active ? 'on' : n + 1 === k.active || n + 1 === k.tabs.length ? '' : 'rule'}">${ic(i)}<span>${t}</span>${ic('x', 8)}</button>`));
  const end = k.from + k.tabs.length * k.step;
  return `<div class="strip">${track(W, [...tabs, at(end, ''), at(end + 6, `<button class="new" aria-label="New tab">${ic('plus', 10)}</button>`), at(W - 75, winCtl, 'top')], 'fullh')}</div>
  ${track(W, [icAt(16, 'back', 12), icAt(38, 'fwd', 12), icAt(61, 'reload', 12), icAt(84, 'home', 12),
    at(100, `<label class="omni">${ic(k.lead, 10)}<input aria-label="Address" placeholder="Search Google or type a URL" value="${k.url}">${k.star ? ic('star', 12) : ''}</label>`), at(W - 215, ''),
    at(W - 205, `<span class="ext">${ic('check')}${k.alert ? '<b class="one">1</b>' : ''}</span>`), at(W - 183, `<span class="ext">${ic('hat')}<b>398</b></span>`), icAt(W - 154, 'why'), icAt(W - 131, 'pocket'), icAt(W - 108, 'gdrive'),
    at(W - 92, '<i class="sep"></i>'), at(W - 87, `<button class="pill">${ic('face', 18)}Paused</button>`), at(W - 28, ''), icAt(W - 15, 'up')], 'bar')}
  ${track(k.full, [...MARKS.slice(0, k.marks).map(([x, i, t]) => at(x, `<a href="#">${ic(i)}${t || ''}</a>`)), at(k.full - 164, '»'), at(k.full - 142, '<i class="sep"></i>'), at(k.full - 131, `<a href="#">${ic('folder')}Other bookmarks</a>`)], 'marks')}
  <div class="page"><slot></slot></div>`;
});

/* ---------- spreadsheet ---------- */
const OK = 'No known issues. POST Tested OK May 2020. Do no';
const ROWS = {
  465: ['ASUS P5PE-VM AGP DDR1 Motherboard w/ Pentium D 3.4 GHz Processor', '', OK],
  466: ['Packard Bell Motherboard 4M4UE0X1.11A.0007.P07 | 266 MHz Pentium II CPU SL2HE | Phoenix Bios 4.0 Release 6.0 | 256 MB RAM', '', OK],
  467: ['ASUS P4S800D-X Motherboard | Pentium 4 2.66 GHz CPU | 512 MB DDR 400 MHz', '', OK, 'plain'],
  468: ['Gigabyte GA-M61PME Motherboard | AMD Phenom II X2 555 CPU | 1GB DDR2 800 MHz', '', OK],
  469: ['ASUS M4A79 Deluxe Motherboard | Phenom II X4 810 2.6 GHz | 2x4GB DDR2 800', '', OK],
  470: ['Acer Q35T-AM.V:1.0A 15-V36-011010 DDR2 with Intel E2200 2.2 GHz EM64T CPU', '', 'POST Tested OK May 2020. Noticed a heatsink scre'],
  471: ['ECS 15-V09-011012 Motherboard with GeForce 7050M-M V2.0 | AMD Athlon Dual Core 5050e 2.6 GHz CPU', '', OK],
  473: ['BFG nVidia GeForce 8600 GT BFGR86512GTOCFE D512M', 'UPC 876758001534', 'No known'],
  474: ['Banner Engineering EZ-Screen Curtain Light Emit Receiver', 'Beams Blocked Diagnostics Banner EZ-SCREEN ZONE RESET STATUSBanner E', 'No known'],
  475: ['IEEE 1394 PCI Expansion Card', 'FW323-05A 1394A Link/PHY Selectron 2001 90128 5187-1554 Rev. BA', 'No known'],
  476: ['Rosewill Wireless LAN PCI Expansion Card | RT2860 | 3 Antenna 802.11b/g/n WiFi', '', 'No known'],
  477: ['nVidia GeForce 6200LE 256MB DDR2 PCI-Ex16 | TV-OUT', '450 MHz Clock', 'No known'],
  478: ['nVidia PNY GeForce 9800 GT PCI-Ex16 512MB GDDR3 HD', 'UPC 4710710444914 Uses 6-pin PCI-E PSU connector', 'No known'],
  479: ['Dell Broadcom 56K PCI Modem BCM94212 V1456VQH89D', '&nbsp;IU 0241 P12 AGR N4002V3 36651253 S', 'No known'],
  480: ['nVidia BFG GeForce GTS 250 BFGRGT82501024DE Video', 'UPC 876758004511 Uses 6-pin PCI-E PSU connector', 'Fan yes'],
  482: ['Eberle Silver Flower Vase', '', ''],
  483: ['Vintage Silver-Colored Nondescript Metal Triple Candle Ho', '', ''],
  484: ['Vintage Silver Nondescript Tea Set Accessory Creamer Cu', '', '']
};
const COLS = [32, 44, 247, 340, 218, 55, 50, 55, 40, 40, 53, 53, 48, 72, 72, 72, 72, 71, 72, 72, 34];
part('sheet-grid', `:host{display:flex;flex:1;min-height:0;overflow:hidden;border-top:1px solid #c0c0c0;font:9px/12px "Liberation Sans",sans-serif;color:#000}
table{table-layout:fixed;border-collapse:separate;border-spacing:0;width:100%;height:799px}
.view{flex:1;min-width:0}
td,th{padding:0 2px;border-right:1px solid #e2e3e3;border-bottom:1px solid #e2e3e3;overflow:hidden;white-space:nowrap;font-weight:400;text-align:left}
thead th,tbody th{background:#f8f9fa;border-color:#c0c0c0;color:#5f6368;text-align:center;font-size:8px}
thead th.sel,tbody th.sel{background:#e8eaed}
.h{height:17px}.r1{height:15px}.r2{height:17px}.frz{height:3px}
.r1 td{font-size:10px;text-align:center;color:#134f5c}
.r2 td:not(.y,.w){background:#000;color:#ff0;font-weight:700;font-size:11px;text-align:center;border-color:#111}
.b{background:#cfe2f3}.o{background:#fce5cd}.p{background:#ead1dc}
.y{background:#ffd966;border-color:#e0bd4e}
.frz td{background:#d5d8e0;border:0}
.g td.c{background-color:#6aa84f;border-color:#609a47}
td.t{background-image:linear-gradient(#3a80c82e,#3a80c82e)}
td.t.d{box-shadow:inset 1px 0 #1a73e8}
td.t.first{box-shadow:inset 1px 1px #1a73e8}
td.z{text-align:right}
.sb{width:8px;flex:none;border-left:1px solid #d7d9dc;background:#f8f9fa;display:flex;flex-direction:column;align-items:center}
.sb i{width:6px;height:300px;margin-top:120px;border-radius:3px;background:#dadce0}`, () => {
  const letters = 'ABCDEFGHIJKLMNOPQRS'.split('');
  const tail = () => '<td class="y"></td>'.repeat(3) + '<td class="w"></td>'.repeat(5);
  let rows = '';
  for (let n = 465; n <= 514; n++) {
    const r = ROWS[n], green = r && r[3] !== 'plain', sel = n >= 469 && n <= 489;
    const t = sel ? ` t d${n === 469 ? ' first' : ''}` : '';
    const bc = r ? (r[1] ? `<td class="c">${r[0]}</td><td class="c">${r[1]}</td>` : `<td class="c" colspan="2">${r[0]}</td>`) : '<td class="c"></td><td class="c"></td>';
    rows += `<tr class="${green ? 'g' : ''}"><th class="${sel ? 'sel' : ''}">${n}</th><td>${String(n - 7).padStart(5, '0')}</td>${bc}<td class="c${t}">${r ? r[2] : ''}</td><td class="c${sel ? ' t' : ''}"></td><td class="c"></td><td class="c z">${n > 508 ? 0 : ''}</td>${'<td class="c"></td>'.repeat(5)}${tail()}</tr>`;
  }
  return `<div class="view"><table><colgroup>${COLS.map(w => `<col style="width:${w}px">`).join('')}</colgroup>
  <thead><tr class="h"><th></th>${letters.map(l => `<th class="${l === 'D' || l === 'E' ? 'sel' : ''}">${l}</th>`).join('')}<th></th></tr></thead>
  <tbody><tr class="r1"><th>1</th><td class="b" colspan="4">Item Data</td><td class="o" colspan="3">Suggested Value</td><td class="b" colspan="2">Item Weight</td><td class="p" colspan="3">Item Dimensions (inches)</td>${tail()}</tr>
  <tr class="r2"><th>2</th>${['ItemID', 'Name', 'Background &amp; Info', 'Condition Description', 'Price', 'QTY', 'Tot Price', 'lb', 'oz', 'Height', 'Length', 'Depth'].map(t => `<td>${t}</td>`).join('')}${tail()}</tr>
  <tr class="frz"><td colspan="21"></td></tr>${rows}</tbody></table></div><div class="sb"><i></i></div>`;
});
const SHEETS = [[83, 'stage1', '#ff9900'], [150, 'stage2', '#ff9900'], [218, 'stage3', '#ff9900'], [287, 'stage4', '#ff9900'], [356, 'stage5', '#ff9900'], [424, 'policies', '#fdefc8'], [498, 'calculators_data', '#0000ff'], [614, 'ebay_todo'], [700, 'aspect_templates'], [822, 'ebay_api_misc'], [929, 'ebay_retrieve_data'], [1058, 'create_item_objects'], [1194, 'get_offers'], [1280, 'Sheet21']];
part('sheets-app', `:host{display:flex;flex-direction:column;flex:1;min-width:0;font:10px/14px Roboto,"Open Sans",sans-serif;color:#3c4043}
.head{height:46px;display:flex;align-items:center;padding:0 14px 0 16px;gap:14px;border-bottom:1px solid #dcdde0}
.logo{width:21px;display:flex}
.names{flex:1;display:flex;flex-direction:column;gap:3px;padding-top:4px}
h1{font-size:13px;line-height:16px;color:#111;display:flex;align-items:center;gap:10px}
h1 span{margin-right:5px}
nav{display:flex;gap:10px;margin-left:-1px}
nav a{color:#777;text-decoration:underline;margin-left:5px}
.share{width:62px;height:26px;border-radius:3px;background:#188038;color:#fff;font-weight:700;display:flex;align-items:center;justify-content:center;gap:3px}
.tools{height:28px;border-bottom:1px solid #dcdde0;color:#5f6368}
.tools select{width:100%}
.tools b{font-size:12px}
.tools i.s{width:1px;height:16px;background:#dcdde0}
.ul{border-bottom:3px solid #000;height:17px;display:flex;align-items:center}
.ul.g{border-color:#6aa84f}
.fx{height:17px}
.fx i{font:italic 12px "Liberation Serif",serif;color:#aaa}
.fx input{width:100%;border-left:1px solid #c8cacc;padding-left:8px;font:9px/12px "Liberation Sans",sans-serif;color:#000}
.hs{height:8px;background:#fff;border-top:1px solid #dcdde0;padding:1px 520px 1px 34px;display:flex}
.hs i{flex:1;background:#dadce0;border-radius:3px}
.tabs{height:29px;background:#f1f3f4;border-top:1px solid #e2e3e5;color:#80868b;font-weight:500}
.tabs button.sh{height:100%;flex:1;display:flex;align-items:center;gap:6px;padding:3px 0 0 10px;border-right:1px solid #e0e2e4;border-bottom:3px solid transparent}
.tabs button.on{background:#fff;color:#188038}
.sum{width:47px;height:20px;background:#fff;border:1px solid #d0d3d6;border-radius:2px;font-weight:400;font-size:8px;color:#3c4043;display:flex;align-items:center;justify-content:space-between;padding:0 4px}
.exp{flex:1;height:100%;background:#fff;border:1px solid #d0d3d6;border-width:0 1px;display:flex;align-items:center;gap:8px;padding-left:8px;color:#188038;font-weight:400}`, () => {
  const car = '<i class="car"></i>', sep = '<i class="s"></i>';
  return `<div class="head"><span class="logo">${ic('sheet', 26)}</span><div class="names"><h1><span>ebay_item_inventory</span>${ic('star', 12)}${ic('move', 12)}${ic('cloud', 12)}</h1>
  <nav>${['File', 'Edit', 'View', 'Insert', 'Format', 'Data', 'Tools', 'Add-ons', 'Help'].map(t => `<button>${t}</button>`).join('')}<a href="#">Last edit was yesterday at 11:47 PM</a></nav></div>
  ${ic('comment', 14)}<button class="share">${ic('people', 11)}Share</button>${ic('lion', 23)}</div>
  ${track(1820, [icAt(31, 'undo', 12), icAt(51, 'redo', 12), icAt(71, 'print', 12), icAt(91, 'brush', 12), at(104, sep), at(115, '<select aria-label="Zoom"><option>100%</option></select>'), at(146, car), at(157, sep), at(167, '$'), at(186, '%'), at(205, '.0'), at(224, '.00'), at(242, '123'), at(260, car), at(269, sep), at(282, '<select aria-label="Font"><option>Arial</option></select>'), at(338, car), at(351, sep), at(362, '<select aria-label="Font size"><option>10</option></select>'), at(392, car), at(404, sep), at(413, '<b>B</b>'), at(434, '<b><i>I</i></b>'), at(453, '<b><s>S</s></b>'), at(470, '<span class="ul"><b>&nbsp;A&nbsp;</b></span>'), at(491, sep), at(498, `<span class="ul g">${ic('bucket', 14)}</span>`), icAt(526, 'grid', 12), icAt(547, 'merge', 12), at(561, car), at(573, sep), icAt(586, 'align', 12), at(595, car), icAt(613, 'valign', 12), at(622, car), icAt(640, 'wrap', 12), at(650, car), icAt(669, 'rotate', 12), at(678, car), at(690, sep), icAt(703, 'link', 14), icAt(723, 'addc', 12), icAt(743, 'chart', 12), icAt(763, 'funnel', 12), at(776, car), at(791, '<b>Σ</b>'), at(805, car), at(815, ''), icAt(1808, 'chevu', 10)], 'tools')}
  ${track(1820, [at(11, '<i>fx</i>'), at(32, '<input aria-label="Formula" value="5">')], 'fx')}
  <sheet-grid></sheet-grid><div class="hs"><i></i></div>
  ${track(1820, [icAt(40, 'plus', 10), icAt(62, 'lines', 10), ...SHEETS.map(([x, t, c], n) => at(x, `<button class="sh ${n ? '' : 'on'}" ${c ? `style="border-bottom-color:${c}"` : ''}>${t}${car}</button>`)), at(1354, ''), at(1651, `<button class="sum">Sum: 70${car}</button>`), at(1706, `<button class="exp">${ic('explore', 13)}Explore</button>`), at(1780, ''), icAt(1800, 'chevl', 10)], 'tabs')}`;
});

/* ---------- desktop windows ---------- */
const GLASS = `:host{position:absolute;box-sizing:border-box;display:flex;flex-direction:column;border:1px solid #3a4a52;border-radius:6px 6px 4px 4px;padding:0 5px 5px;box-shadow:0 0 0 1px #ffffffaa inset,0 2px 8px #0009;backdrop-filter:blur(4px);overflow:hidden;color:#000}`;
part('note-pad', `${GLASS}
:host{left:316px;top:460px;width:800px;height:261px;background:linear-gradient(#ffffffc0,#c8f5e870 8px,#bff0dd50 20px,#ffffffb0 120px)}
.title{height:20px;display:flex;align-items:center;gap:4px;padding-left:2px}
.menu{height:16px;display:flex;align-items:center;gap:9px;padding-left:4px;color:#6d7078;background:linear-gradient(#fff,#dde2f1);border:1px solid #6a7a80;border-bottom-color:#b8bccc}
.text{flex:1;background:#fff;border:1px solid #8a9096;border-top:0;font:17px/17px "DejaVu Sans Mono","Liberation Mono",monospace;padding:1px 2px;white-space:pre}
mark{background:#3399ff;color:#fff}`, () => `<div class="title">${ic('notepad', 11)}newPassandPhone.txt - Notepad</div>
<div class="menu">${['File', 'Edit', 'Format', 'View', 'Help'].map(t => `<button>${t}</button>`).join('')}</div>
<div class="text" role="textbox" contenteditable="true" spellcheck="false"><br>?(586) 745-0249?<br><br><mark>$3ACF$56adsT1A$C43</mark></div>`);

part('file-explorer', `${GLASS}
:host{left:886px;top:208px;width:809px;height:667px;background:linear-gradient(90deg,#a0e0c040,#a8e4c848 46%,#ffffff90 49%,#ffffffb0)}
.cap{height:13px;display:flex;justify-content:flex-end}
.wc{background:#ffffff88;border-color:#7a8288}
.addr{height:32px;color:#3d4a50}
.round{width:18px;height:18px;border-radius:50%;background:radial-gradient(#3f7fd8,#123c86);border:1px solid #cfe0f0;display:flex;align-items:center;justify-content:center}
.round.f{width:15px;height:15px;background:#b9d6c8}
.box{flex:1;height:15px;border:1px solid #7b8a90;background:#ffffffb8;display:flex}
.search{display:flex;align-items:center;padding:0 3px;flex:1;height:15px;border:1px solid #7b8a90;background:#ffffffcc;margin-left:5px}
.search input{flex:1;min-width:0;font-style:italic;color:#666}
.search input::placeholder{color:#777;opacity:1}
.in{flex:1;min-height:0;border:1px solid #5d6a70;display:flex;flex-direction:column;background:#fcfcfc}
.menu{height:15px;background:linear-gradient(#fff,#d5daee);border-bottom:1px solid #c4cadb;flex:none}
.tools{height:21px;background:linear-gradient(#f8fbff,#dce7f5 50%,#dbe6f4);border-bottom:1px solid #a9bcd2;color:#1e395b;flex:none}
.tools .cell{gap:5px}
.main{flex:1;display:flex;min-height:0}
.nav{width:184px;border-right:1px solid #d9e5f2;padding-top:7px;display:flex;flex-direction:column;color:#111}
.nav a{height:15px;display:flex;align-items:center;gap:4px;padding-left:21px;white-space:nowrap;flex:none}
.nav a.top{padding-left:11px}
.nav .gap{height:254px;flex:none}
.nav .small{height:14px;flex:none}
table{border-spacing:0;width:410px;height:51px;table-layout:fixed;margin-left:12px;color:#6d6d6d}
th,td{font-weight:400;text-align:left;padding:0;white-space:nowrap}
th{color:#4c607a;height:20px;border-right:1px solid #e3e8f0}
th+th,td+td{padding-left:4px}
td:first-child{color:#111}
td ui-icon{margin:0 3px 0 2px;vertical-align:middle}
td:last-child{text-align:right;padding-right:4px}
.hot td{background:#f1f3f5}
.det{height:39px;flex:none;border-top:2px solid #c9d8ec;background:#f0f3fb;display:grid;grid-template-columns:32px 58px 56px 92px 50px 1fr;column-gap:4px;grid-template-rows:13px 13px;align-content:center;padding-left:14px;color:#5a6a80;line-height:13px;white-space:nowrap}
.det ui-icon{grid-row:1/3;align-self:center}
.det b{font-weight:400;color:#111}
.det .r{text-align:right}`, () => {
  const car = '<i class="car"></i>', arr = '▸';
  const it = (i, t, c = '') => `<a href="#" class="${c}">${ic(i, 10)}${t}</a>`;
  return `<div class="cap">${winCtl}</div>
  ${track(797, [at(2, `<button class="round" aria-label="Back"><svg width="10" height="10" viewBox="0 0 16 16"><path d="M15 8H3M8 3L3 8l5 5" stroke="#fff" stroke-width="3" fill="none"/></svg></button>`), at(22, `<button class="round f" aria-label="Forward"><svg width="8" height="8" viewBox="0 0 16 16"><path d="M1 8h12M8 3l5 5-5 5" stroke="#eef" stroke-width="3" fill="none"/></svg></button>`), at(41, car), at(49, `<div class="box">${track(608, [at(2, ic('addrf', 11)), at(17, arr), at(28, 'Computer'), at(72, arr), at(83, 'Local Disk (C:)'), at(142, arr), at(153, 'Users'), at(179, arr), at(188, 'Joseph'), at(220, arr), at(230, 'Desktop'), at(267, arr), at(277, 'New folder'), at(579, car), at(593, ic('refresh', 10))])}</div>`), at(657, `<label class="search"><input aria-label="Search" placeholder="Search New folder">${ic('magb', 10)}</label>`)], 'addr')}
  <div class="in">${track(797, [[5, 'File'], [30, 'Edit'], [56, 'View'], [85, 'Tools'], [117, 'Help']].map(([x, t]) => at(x, `<button>${t}</button>`)), 'menu')}
  ${track(797, [at(11, `<button>Organize</button>${car}`), at(77, `${ic('notepad', 12)}<button>Open</button>`), at(119, car), at(145, `<button>Share with</button>${car}`), at(215, '<button>Print</button>'), at(255, '<button>New folder</button>'), icAt(717, 'view', 12), at(728, car), icAt(755, 'pane', 11), icAt(781, 'help', 11)], 'tools')}
  <div class="main"><div class="nav">${it('gold', 'Favorites', 'top')}${it('desk', 'Desktop')}<div class="gap"></div>${it('bd', 'BD-ROM Drive (D:) AMAZONTRAIL')}${it('drive', 'Storage 1TB (G:)')}${it('cd', 'CD Drive (H:)')}${it('drive', 'Files &amp; Programs (N:)')}${it('drive', '500GB_2.5Spindle (R:)')}${it('drive', 'FileShare (T:)')}${it('drive', 'Storage (V:)')}${it('drive', 'Entertainment (W:)')}<div class="small"></div>${it('net', 'Network', 'top')}</div>
  <table><colgroup><col style="width:182px"><col style="width:86px"><col style="width:85px"><col style="width:57px"></colgroup><tr><th>Name</th><th>Date modified</th><th>Type</th><th>Size</th></tr>
  <tr><td>${ic('txt', 10)}a1f2.txt</td><td>6/28/2020 12:25 AM</td><td>Text Document</td><td>1 KB</td></tr><tr class="hot"><td>${ic('txt', 10)}af6.txt</td><td>6/29/2020 3:05 PM</td><td>Text Document</td><td>1 KB</td></tr></table></div>
  <div class="det">${ic('txt', 28)}<b>af6.txt</b><span class="r">Date modified:</span><b>6/29/2020 3:05 PM</b><span class="r">Date created:</span><b>6/29/2020 3:05 PM</b><span>Text Document</span><span class="r">Size:</span><b>416 bytes</b></div></div>`;
});

const PALETTE = ['#000', '#7f7f7f', '#880015', '#ed1c24', '#ff7f27', '#fff200', '#22b14c', '#00a2e8', '#3f48cc', '#a349a4', '#fff', '#c3c3c3', '#b97a57', '#ffaec9', '#ffc90e', '#efe4b0', '#b5e61d', '#99d9ea', '#7092be', '#c8bfe7', ...Array(10).fill('transparent')];
part('paint-app', `${GLASS}
:host{left:693px;top:321px;width:722px;height:262px;padding:0 4px 4px;border-color:#111;background:linear-gradient(90deg,#9cc8f099,#b0d4f8d0 30%,#a9cff7cc 70%,#8fb8e4cc);box-shadow:0 0 0 1px #ffffff88 inset,0 3px 12px #000c}
.cap{height:20px;flex:none;color:#000}
.cap .wc{width:72px;height:14px;align-self:flex-start;border-color:#223}
.cap .wc button:last-child{background:linear-gradient(#e8988a,#c43f28 50%,#b8341c)}
.cap i.s{width:1px;height:9px;background:#6f8aa8}
.tt{align-self:flex-end;height:18px;width:46px;background:linear-gradient(#8fd080,#c8f4a8);border:1px solid #6cc84a;border-bottom:0;border-radius:2px 2px 0 0;text-align:center;line-height:16px;color:#2d4f35}
.ribtabs{height:18px;flex:none;background:#dfe9f6;border-top:1px solid #333;border-bottom:1px solid #84e04a;color:#1e395b}
.file{width:40px;height:16px;background:linear-gradient(#3f78c0,#1b4f9c 50%,#2a6bc0);display:flex;align-items:center;justify-content:center;gap:3px;color:#fff}
.txt{width:41px;height:17px;background:#fff;border:1px solid #84e04a;border-bottom:0;text-align:center;align-self:flex-end}
.rib{height:65px;flex:none;display:flex;background:linear-gradient(#dfe9f6,#d9e5f3 60%,#e3edf9);border-bottom:1px solid #9fb2c8;color:#1e395b}
.grp{display:flex;flex-direction:column;border-right:1px solid #b4c4d8;margin:3px 0 0;flex:none}
.grp>div{flex:1;display:flex;min-height:0}
.grp>p{text-align:center;color:#6b7c94;line-height:12px}
.big{display:flex;flex-direction:column;align-items:center;color:#8b96a5;width:38px;gap:3px;padding-top:1px}
.col{display:flex;flex-direction:column;gap:1px}
.row{display:flex;align-items:center;gap:4px;height:15px}
.dim{color:#8b96a5}
.sel{border:1px solid #abbccf;background:#f5f9fd;height:15px;display:flex;align-items:center;justify-content:space-between;padding:0 2px}
.sel select{flex:1;min-width:0}
.pair{display:flex;gap:2px}
.fmt{display:flex;height:15px;border:1px solid #b7c6d8;flex:1;font-family:"Liberation Serif",serif;font-weight:700;font-size:10px}
.fmt button{flex:1;text-align:center}
.fmt .on,.hl{background:linear-gradient(#fdd78c,#fcb94a);border:1px solid #c29b3c}
.hl{border-radius:2px;padding:0 2px}
.cbtn{width:29px;height:46px;display:flex;flex-direction:column;align-items:center;text-align:center;line-height:9px;border-radius:2px;flex:none}
.cbtn i{width:21px;height:21px;border:1px solid #8b8b8b;box-shadow:inset 0 0 0 1px #fff;margin:2px 0 4px;flex:none}
.cbtn.s{width:31px}
.cbtn.s i{width:17px;height:17px;margin:4px 0 6px}
.pal{display:grid;width:156px;grid-template-columns:repeat(10,1fr);grid-auto-rows:14px;gap:2px;align-content:start;padding-top:1px}
.pal button{border:1px solid #a0a0a0;box-shadow:inset 0 0 0 1px #f2f6fb}
.rain{background:linear-gradient(90deg,#f33,#fd3 20%,#3f5 40%,#3ef 60%,#33f 75%,#f3f 90%,#f55)}
.work{flex:1;min-height:0;background:linear-gradient(#c7d0e1,#dce5f1);display:flex;position:relative;overflow:hidden}
.paper{background:#fff;width:477px;margin:3px 0 0 4px}
.work svg{position:absolute;left:0;top:0}
.word{position:absolute;left:56px;top:11px;font:700 50px/56px "Liberation Serif",serif;color:#000}
.vs{margin-left:auto;width:11px;background:#eef0f2;display:flex;flex-direction:column;justify-content:space-between;align-items:center;padding:5px 0;color:#777}
.up{transform:rotate(180deg)}
.st{height:19px;flex:none;background:#f1edec;border-top:1px solid #cfd3d8}
.st .cell.d{border-left:1px solid #d4d0d0}
.st .cell.d ui-icon{margin:0 4px 0 8px}
input[type=range]{width:60px;height:10px;background:linear-gradient(#999,#999) center/100% 1px no-repeat}
input[type=range]::-webkit-slider-thumb{appearance:none;width:6px;height:10px;background:#e8e8e8;border:1px solid #777;border-radius:1px 1px 3px 3px}`, () => {
  const car = '<i class="car"></i>';
  const handles = [[54, 2], [268, 2], [481, 2], [54, 69], [481, 69]].map(([x, y]) => `<rect x="${x - 1.5}" y="${y - 1}" width="3" height="3" fill="#fff" stroke="#333" stroke-width=".8"/>`).join('');
  return `${track(712, [at(1, ic('paint', 12)), at(17, '<i class="s"></i>'), icAt(30, 'save', 11), icAt(45, 'bundo', 11), icAt(60, 'bredo', 11), at(71, car), at(84, '<i class="s"></i>'), at(122, '<span class="tt">Text Tools</span>'), at(177, 'Untitled - Paint'), at(639, winCtl)], 'cap')}
  ${track(712, [at(0, `<button class="file" aria-label="File">${ic('app', 10)}${car}</button>`), at(50, '<button>Home</button>'), at(91, '<button>View</button>'), at(124, '<button class="txt">Text</button>'), icAt(703, 'help', 10)], 'ribtabs')}
  <div class="rib">
   <div class="grp" style="width:75px"><div><div class="big">${ic('paste', 22)}Paste</div><div class="col dim"><button class="row">${ic('cut', 10)}Cut</button><button class="row">${ic('copy', 10)}Copy</button></div></div><p>Clipboard</p></div>
   <div class="grp" style="width:107px"><div class="col" style="padding:5px 4px 0;gap:5px"><label class="sel"><select aria-label="Font family"><option>Adobe Caslon Pro</option></select>${car}</label><div class="pair"><label class="sel" style="width:30px"><select aria-label="Font size"><option>55</option></select>${car}</label><div class="fmt"><button class="on">B</button><button><i>I</i></button><button><u>U</u></button><button><s>abc</s></button></div></div></div><p>Font</p></div>
   <div class="grp" style="width:69px"><div class="col" style="padding-left:4px"><button class="row" style="padding-left:3px">${ic('opq', 10)}Opaque</button><button class="row hl" style="width:61px">${ic('opq', 10)}<span>Transparent</span></button></div><p>Background</p></div>
   <div class="grp" style="width:254px"><div style="padding-left:5px"><button class="cbtn hl"><i style="background:#000"></i>Color<br>1</button><button class="cbtn s"><i style="background:#fff"></i>Color<br>2</button><div class="pal">${PALETTE.map(c => `<button aria-label="Color" style="background:${c}"></button>`).join('')}</div><button class="cbtn"><i class="rain"></i>Edit<br>colors</button></div><p>Colors</p></div>
  </div>
  <div class="work"><div class="paper"></div><span class="word">folder</span>
   <svg width="500" height="136"><path d="M48 20c-3 2-2 8 0 10l5 3 49 14 80 24 104 31 47 13 28 8 52 13" fill="none" stroke="#000" stroke-width="2"/><path d="M54 136V2h427v134" fill="none" stroke="#2d8cf0" stroke-dasharray="4 2"/>${handles}</svg>
   <div class="vs"><i class="car up"></i><i class="car"></i></div></div>
  ${track(712, [at(1, ic('cross', 10)), at(110, `${ic('dim', 10)}118 × 37px`, 'd'), at(221, `${ic('dim', 10)}668 × 456px`, 'd'), at(331, '', 'd'), at(443, '', 'd'), at(556, '', 'd'), at(571, '100%'), icAt(602, 'minusc', 11), at(615, '<input type="range" aria-label="Zoom">'), icAt(689, 'plusc', 11)], 'st')}`;
});

/* ---------- search results ---------- */
part('google-results', `:host{display:flex;flex:1;min-width:0;font:10px/16px Roboto,sans-serif;color:#4d5156;background:#fff}
.page{flex:1;min-width:0;overflow:hidden}
.top{display:flex;align-items:center;height:47px;padding:15px 48px 0 17px}
.logo{width:97px;font:500 22px/32px Lato,sans-serif;color:#4285f4}
.logo i{font-style:normal}
.q{width:492px;height:32px;border:1px solid #dfe1e5;border-radius:16px;display:flex;align-items:center;gap:12px;padding:0 14px;color:#222}
.q input{flex:1;min-width:0;font:11px/16px Roboto,sans-serif}
.q i{width:1px;height:20px;background:#dfe1e5}
.sp{flex:1}
.tabs{height:41px;border-bottom:1px solid #ebebeb;color:#5f6368;padding-top:8px}
.tabs a{display:flex;align-items:center;gap:4px;height:32px}
.tabs .on{border-bottom:2px solid #1a73e8;color:#1a73e8;padding:0 9px 0 7px}
.body{padding:7px 0 0 128px;width:593px}
.stats{color:#70757a}
.res{margin-top:12px}
.url{color:#70757a;display:flex;align-items:center;gap:8px;white-space:pre}
.url b{font-weight:400;color:#202124}
h3{font-size:14px;line-height:21px;color:#1a0dab;white-space:nowrap}
.sn p{white-space:nowrap}
.sn b{color:#5f6368}
.mute{color:#70757a}
.paa{border:1px solid #dfe1e5;border-radius:6px;margin:19px 0 0;color:#202124;font-size:11px}
.paa h2{font-size:14px;line-height:31px;padding-left:12px}
.paa button{display:flex;width:100%;height:31px;align-items:center;justify-content:space-between;padding:0 15px 0 12px;border-top:1px solid #dfe1e5}
.fb{text-align:right;font:italic 9px/16px Roboto,sans-serif;color:#70757a;padding-right:12px;margin-top:1px}
.res+.res{margin-top:20px}
.fb+.res{margin-top:17px}
.sb{width:12px;background:#f1f1f1;display:flex;flex-direction:column;align-items:center;color:#888;padding:5px 0}
.sb .th{width:9px;height:188px;background:#c1c1c1;margin:4px 0 auto}
.up{transform:rotate(180deg)}`, () => {
  const res = (u, t, ls, miss) => `<div class="res"><div class="url"><span><b>${u[0]}</b>${u[1]}</span><i class="car"></i></div><h3><a href="#">${t}</a></h3><div class="sn">${ls.map(l => `<p>${l}</p>`).join('')}<p class="mute">Missing: <s>${miss}</s></p></div></div>`;
  return `<div class="page"><div class="top"><div class="logo">G<i style="color:#ea4335">o</i><i style="color:#fbbc05">o</i>g<i style="color:#34a853">l</i><i style="color:#ea4335">e</i></div>
  <label class="q"><input aria-label="Search" value="pma and pa married in vermont , then went to salem (where witch trials at) w">${ic('xthin', 12)}<i></i>${ic('mic', 14)}${ic('mag', 14)}</label><span class="sp"></span>${ic('nine', 11)}<span style="width:17px"></span>${ic('lion', 23)}</div>
  ${track(1353, [at(121, `<a href="#" class="on">${ic('magc', 10)}All</a>`), at(171, `<a href="#">${ic('news', 10)}News</a>`), at(226, `<a href="#">${ic('pic', 10)}Images</a>`), at(289, `<a href="#">${ic('vid', 10)}Videos</a>`), at(349, `<a href="#">${ic('tag', 10)}Shopping</a>`), at(417, `<a href="#" style="gap:1px">${ic('dots', 10)}More</a>`), at(510, '<a href="#">Settings</a>'), at(561, '<a href="#">Tools</a>')], 'tabs')}
  <div class="body"><p class="stats">About 8 results (1.13 seconds)</p>
  ${res(['www.smithsonianmag.com', ' › history › a-brief-history-o...'], 'A Brief History of the Salem Witch Trials - Smithsonian Magazine', ['<span class="mute">Oct 23, 2007 - </span>A girl is accused during <b>the Salem Witch Trials</b> (Bettmann / CORBIS) ... More <b>than</b>', '200 <b>people</b> were accused of practicing witchcraft—<b>the</b> Devil\'s ... strong belief that <b>the</b> Devil <b>could</b>', 'give certain <b>people</b> known as witches <b>the</b> power to ... Though <b>the Salem</b> trials <b>came</b> on just as', '<b>the</b> European craze was winding ...'], 'pma</s> <s>married</s> <s>vermont ,')}
  <div class="paa"><h2>People also ask</h2>${['What was the real cause of the Salem witch trials?', 'Who was targeted in the Salem witch trials?', 'What happened to Salem after the witch trials?', 'Who was involved in the Salem witch trials as prosecutors and victims?'].map(t => `<button>${t}${ic('chev', 11)}</button>`).join('')}</div><p class="fb">Feedback</p>
  ${res(['en.wikipedia.org', ' › wiki › Salem_witch_trials'], 'Salem witch trials - Wikipedia', ['<b>The Salem witch trials</b> were a series of hearings and prosecutions of <b>people</b> accused of', 'witchcraft in colonial Massachusetts between February 1692 and <b>May</b> ...'], 'pma</s> <s>vermont ,')}
  ${res(['www.history.com', ' › topics › colonial-america › salem-w...'], 'Salem Witch Trials - Events, Facts &amp; Victims - HISTORY', ['<span class="mute">Nov 4, 2011 - </span><b>The</b> infamous <b>Salem witch trials</b> were a series of prosecutions for witchcraft ...', 'Learn about what led to <b>the</b> allegations and <b>the</b> hundreds of <b>people</b> who were were accused. ...', 'Though <b>the</b> Massachusetts General Court <b>later</b> annulled guilty ... Amid <b>these</b> simmering', 'tensions, <b>the Salem witch trials would</b> be ...'], 'pma</s> <s>pa</s> <s>married</s> <s>vermont ,')}
  </div></div><div class="sb"><i class="car up"></i><div class="th"></div><i class="car"></i></div>`;
});

/* ---------- repository page ---------- */
part('github-page', `:host{display:flex;flex:1;min-width:0;font:9px/14px "Open Sans","Noto Sans",sans-serif;color:#24292e;background:#fff}
.page{flex:1;min-width:0;overflow:hidden;display:flex;flex-direction:column}
.head{height:38px;background:#24292e;color:#fff;font-weight:600;flex:none}
.jump{width:213px;height:20px;border-radius:3px;background:#3f4448;display:flex;align-items:center;padding:0 5px 0 9px}
.jump input{flex:1;min-width:0;font-weight:400}
.jump input::placeholder{color:#a9adb0;opacity:1}
kbd{font:8px/12px "Open Sans",sans-serif;border:1px solid #777b7e;border-radius:2px;width:13px;height:14px;text-align:center;color:#aaa}
.hero{height:212px;flex:none;border-bottom:1px solid #e1e4e8;background:linear-gradient(180deg,#fff0 55%,#fff),linear-gradient(90deg,#dbedff 25%,#e0f3f9 60%,#e9ffee);text-align:center;position:relative}
h1{font-size:20px;line-height:28px;font-weight:300;padding-top:53px;color:#24292e}
.hero p{font-size:11px;line-height:16px;color:#586069;margin-top:10px}
.go{width:152px;height:30px;margin-top:22px;border-radius:4px;background:#2ea44f;border:1px solid #2a9447;color:#fff;font-size:10px;font-weight:600;text-align:center}
.shut{position:absolute;right:17px;top:14px;width:20px;height:20px;border:1px solid #bcd5cf;border-radius:50%;display:flex;align-items:center;justify-content:center}
.repo{background:#fafbfc;border-bottom:1px solid #e1e4e8;flex:none;height:80px}
.name{display:flex;align-items:center;padding:13px 23px 11px;gap:8px;height:45px}
.name h2{font-size:13px;line-height:20px;color:#0366d6;flex:1}
.name h2 i{color:#586069;font-style:normal}
.cnt{display:flex;height:20px;border:1px solid #d9dce0;border-radius:3px;background:#fafbfc;font-size:8px;font-weight:600;line-height:18px;text-align:center}
.cnt button{display:flex;align-items:center;justify-content:center;gap:2px}
.cnt span{border-left:1px solid #d9dce0;background:#fff;width:22px}
.nav{height:35px}
.nav .cell{gap:5px}
.nav .cell.on{box-shadow:inset 0 -2px #f9826c;padding-left:11px}
.crumb{font-size:10px;color:#0366d6;padding:25px 23px 14px;font-weight:600;line-height:14px}
.crumb i{font-weight:400;color:#586069;font-style:normal}
.drop{margin:0 23px;height:226px;flex:none;border:1px solid #e1e4e8;border-radius:3px;display:flex;flex-direction:column;align-items:center;padding-top:71px;color:#586069}
.drop svg{margin-bottom:6px}
.drop h2{font-size:16px;line-height:22px;font-weight:400}
.drop p{font-size:11px;line-height:16px;margin-top:6px}
.drop a{color:#0366d6}
.file{margin:0 23px;height:30px;flex:none;border:1px solid #e1e4e8;display:flex;align-items:center;gap:5px;padding:0 8px 3px 12px;color:#6a737d}
.file span{flex:1}
.sb{width:12px;background:#f1f1f1;display:flex;flex-direction:column;align-items:center;color:#888;padding:5px 0}
.sb .th{width:9px;height:382px;background:#c1c1c1;margin:4px 0 auto}
.up{transform:rotate(180deg)}`, () => {
  const car = '<i class="car"></i>';
  const nav = [[97, 'issue', 'Issues'], [161, 'pr', 'Pull requests'], [258, 'act', 'Actions'], [330, 'proj', 'Projects'], [404, 'wiki', 'Wiki'], [462, 'shield', 'Security'], [537, 'graph', 'Insights'], [610, 'gear', 'Settings']];
  const g = '#6a6a6a', pg = (x, y, w, h, f) => `<path d="M${x} ${y}h${w - f}l${f} ${f}v${h - f}h${-w}z" fill="none" stroke="${g}" stroke-width="1.5"/>`;
  return `<div class="page">${track(898, [icAt(23, 'octow', 23), at(46, `<label class="jump"><input aria-label="Search" placeholder="Search or jump to..."><kbd>/</kbd></label>`), ...[[270, 'Pull requests'], [339, 'Issues'], [378, 'Marketplace'], [445, 'Explore']].map(([x, t]) => at(x, `<a href="#">${t}</a>`)), at(500, ''), icAt(815, 'bell', 13), icAt(838, 'plusw', 10), at(847, car), icAt(871, 'ident', 14), at(881, car)], 'head')}
  <div class="hero"><h1>Learn Git and GitHub without any code!</h1><p>Using the Hello World guide, you’ll start a branch, write comments, and open a pull request.</p><button class="go">Read the guide</button><button class="shut" aria-label="Dismiss">${ic('x', 9)}</button></div>
  <div class="repo"><div class="name">${ic('repo', 12)}<h2><a href="#">Perfectfire33</a> <i>/</i> <a href="#"><b>flaskr</b></a></h2>
   <div class="cnt"><button style="width:64px">${ic('eye', 11)}Unwatch</button><span>1</span></div><div class="cnt"><button style="width:45px">${ic('star2', 11)}Star</button><span>0</span></div><div class="cnt"><button style="width:47px;color:#959da5">${ic('fork', 11)}Fork</button><span>0</span></div></div>
   ${track(898, [at(23, `${ic('code', 11)}<a href="#">Code</a>`, 'on'), at(85, ''), ...nav.map(([x, i, t]) => at(x, `${ic(i, 11)}<a href="#">${t}</a>`)), at(680, '')], 'nav')}</div>
  <div class="crumb"><a href="#">flaskr</a> <i>/</i></div>
  <div class="drop"><svg width="144" height="38">${pg(1, 12, 16, 18, 4)}${pg(25, 5, 23, 29, 6)}${pg(57, 1, 29, 36, 8)}${pg(94, 5, 23, 29, 6)}${pg(126, 12, 15, 18, 4)}
   <path d="M9 14v8M8 25h3v3H8zM29 9v21h15M33 12v15M37 17v10M41 21v6M69 15l-6 6 6 6M75 15l6 6-6 6M98 12h7M98 17h14M98 21h14M98 25h14M98 29h14M129 28q5-6 5-12 1 8 6 9-6 0-11 3" fill="none" stroke="${g}" stroke-width="2"/></svg>
   <h2>Drag additional files here to add them to your repository</h2><p>Or <a href="#">choose your files</a></p></div>
  <div class="file">${ic('doc', 11)}<span>af6.txt</span>${ic('x', 8)}</div></div><div class="sb"><i class="car up"></i><div class="th"></div>${car}</div>`;
});

/* ---------- task bars ---------- */
const BARS = {
  left: { w: 1820, bw: 108, items: [[2, 'notepad', 'newPassandPho...'], [117, 'chrome', 'ebay_item_inve...'], [232, 'tfolder', 'New folder'], [347, 'cmd', 'Administrator: Co...'], [463, 'paint', 'Untitled - Paint', 'lit'], [578, 'calc', 'Calculator']], end: 693 },
  mid: { w: 1365, bw: 68, items: [[83, 'chrome', 'Googl...', 'gold'], [156, 'cube', 'PeerBlo...'], [230, 'fox', 'My Driv...'], [303, 'vm', 'Win_7_x...'], [377, 'npp', 'R:\\Note...'], [450, 'pc', 'Windo...'], [523, 'auth', 'WinAuth'], [597, 'danius', 'Danius...'], [670, 'lib', 'Wind...'], [743, 'notepad', 'Notepad'], [816, 'steam', 'Steam ...']], end: 888 },
  right: { w: 910, bw: 88, items: [[2, 'chrome', 'The 144000...', 'pale'], [91, 'bolt', '1. Killumin...'], [181, 'chrome', 'Inbox (151)...'], [271, 'chrome', 'We Have It...'], [360, 'chrome', 'ALERT! 4 ...'], [450, 'chrome', 'Upload file...'], [540, 'tfolder', '-[toORGA...'], [630, 'tfolder', '-[toORGA...'], [719, 'rl', 'RuneLite'], [809, 'steam', 'Friends List']], end: 899 }
};
const TRAY = ['discord', 'bt', 'nbox', 'tw', 'steam', 'apm', 'ball', 'mon', 'nv', 'arrow', 'circ', 'dotg', 'netg', 'leds', 'drop', 'arrow', 'bolt', 'flag', 'cube', 'mon', 'vol'];
part('task-bar', `:host{display:block;position:relative;color:#fff;background:linear-gradient(100deg,#3c6272,#3a6070 40%,#2f5463 46%,#3c6272 55%,#34596a 80%,#426a7b);border-top:1px solid #0c1a22}
:host([kind=mid]){background:linear-gradient(90deg,#2d5362 36%,#8aa2bd 41%,#8ba5c2 90%,#7c93ab)}
:host([kind=right]){background:linear-gradient(90deg,#9db3c8,#4b6f80 12%,#3c6272)}
.row{height:27px}
.b{height:26px;flex:none;border:1px solid #10222b;border-radius:2px;box-shadow:inset 0 0 0 1px #ffffff55;background:linear-gradient(165deg,#ffffff4d 40%,#ffffff14 60%);display:flex;align-items:center;gap:4px;padding-left:3px;overflow:hidden;text-shadow:0 0 2px #0008}
.lit{background:linear-gradient(165deg,#ffffffa0 40%,#ffffff60 60%)}
.pale{background:linear-gradient(90deg,#ffffff30,#ffffffaa)}
.gold{background:linear-gradient(90deg,#fff3c8,#d9b658 60%,#8b8350)}
.clock{flex:1;text-align:center;line-height:13px;display:block}
.show{width:9px;height:26px;border:1px solid #5d7388;background:#ffffff55}`, el => {
  const kind = el.getAttribute('kind'), k = BARS[kind];
  const btn = k.items.map(([x, i, t, c]) => at(x, `<button class="b ${c || ''}" style="width:${k.bw}px">${ic(i, kind === 'left' ? 23 : 22)}${t}</button>`));
  const pre = kind === 'mid' ? [icAt(19, 'orb', 25), icAt(61, 'launcher', 22)] : [];
  const post = kind === 'mid' ? [at(897, 'Desktop'), at(933, '»'), ...TRAY.map((n, i) => icAt(952 + i * 17, n, 12)), at(1305, '<span class="clock">3:05 PM<br>6/29/2020</span>'), at(1355, '<i class="show"></i>')] : [];
  return track(k.w, [...pre, ...btn, at(k.end, ''), ...post], 'row');
});
</script>
</body>
</html>
